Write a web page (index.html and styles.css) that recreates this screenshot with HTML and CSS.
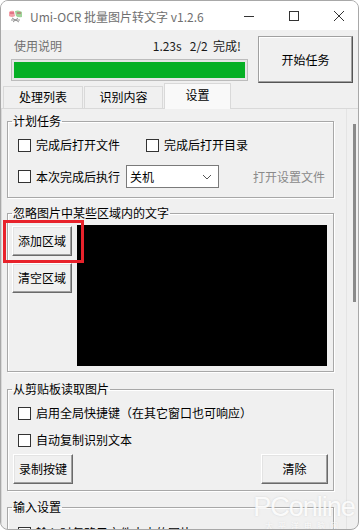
FILE: index.html
```html
<!DOCTYPE html>
<html lang="zh-CN">
<head>
    <meta charset="UTF-8">
    <meta name="viewport" content="width=device-width, initial-scale=1.0">
    <title>Umi-OCR 批量图片转文字 v1.2.6</title>
    <link rel="stylesheet" href="styles.css">
</head>
<body>
    <div class="window">
        <div class="titlebar">
            <svg class="app-icon" width="15" height="13" viewBox="0 0 15 13">
                <path d="M1 2 Q3 0 6 1 L7 6 Q4 8 1 6 Z" fill="#f2a0a8"/>
                <path d="M7 1 Q11 -0.5 14 2 L14 7 Q10 8 8 6 Z" fill="#9fd49a"/>
                <path d="M2 3 L6 3 M9 3 L13 3" stroke="#c35" stroke-width="0.8"/>
                <path d="M4 8 L11 12 M5 12 L10 8 M3 10 L12 10" stroke="#8a8a8a" stroke-width="0.9"/>
            </svg>
            <span class="title">Umi-OCR 批量图片转文字 v1.2.6</span>
            <div class="controls">
                <svg width="10" height="10" viewBox="0 0 10 10"><path d="M0 5.5 H10" stroke="#333" stroke-width="1"/></svg>
                <svg width="10" height="10" viewBox="0 0 10 10"><rect x="0.5" y="0.5" width="9" height="9" fill="none" stroke="#333" stroke-width="1"/></svg>
                <svg width="10" height="10" viewBox="0 0 10 10"><path d="M0 0 L10 10 M10 0 L0 10" stroke="#333" stroke-width="1"/></svg>
            </div>
        </div>

        <div class="top">
            <div class="status">
                <div class="status-row">
                    <span class="help">使用说明</span>
                    <span class="info">1.23s&nbsp;&nbsp; 2/2&nbsp; 完成!</span>
                </div>
                <div class="progress"><div class="progress-fill" style="width: 100%"></div></div>
            </div>
            <button class="btn start">开始任务</button>
        </div>

        <div class="tabs">
            <div class="tab tab-wide">处理列表</div>
            <div class="tab">识别内容</div>
            <div class="tab active">设置</div>
        </div>

        <div class="panel">
            <div class="settings">
                <!-- 计划任务 -->
                <fieldset class="group group-plan">
                    <legend>计划任务</legend>
                    <div class="group-body">
                        <div class="row">
                            <label class="check check-first"><span class="box"></span>完成后打开文件</label>
                            <label class="check"><span class="box"></span>完成后打开目录</label>
                        </div>
                        <div class="row row-exec">
                            <label class="check"><span class="box"></span>本次完成后执行</label>
                            <div class="combo">
                                <span>关机</span>
                                <svg width="10" height="6" viewBox="0 0 10 6"><path d="M1 1 L5 5 L9 1" fill="none" stroke="#555" stroke-width="1"/></svg>
                            </div>
                            <span class="link">打开设置文件</span>
                        </div>
                    </div>
                </fieldset>

                <!-- 忽略区域 -->
                <fieldset class="group group-area">
                    <legend>忽略图片中某些区域内的文字</legend>
                    <div class="group-body area-body">
                        <div class="area-buttons">
                            <div class="mark-wrap">
                                <button class="btn small">添加区域</button>
                                <div class="mark"></div>
                            </div>
                            <button class="btn small">清空区域</button>
                        </div>
                        <div class="canvas"></div>
                    </div>
                </fieldset>

                <!-- 剪贴板 -->
                <fieldset class="group group-clip">
                    <legend>从剪贴板读取图片</legend>
                    <div class="group-body">
                        <div class="row">
                            <label class="check"><span class="box"></span>启用全局快捷键（在其它窗口也可响应）</label>
                        </div>
                        <div class="row row-second">
                            <label class="check"><span class="box"></span>自动复制识别文本</label>
                        </div>
                        <div class="btn-row">
                            <button class="btn small">录制按键</button>
                            <button class="btn clear">清除</button>
                        </div>
                    </div>
                </fieldset>

                <!-- 输入设置 -->
                <fieldset class="group group-input">
                    <legend>输入设置</legend>
                    <div class="group-body">
                        <div class="row">
                            <label class="check"><span class="box"></span>输入时忽略子文件夹内的图片</label>
                        </div>
                    </div>
                </fieldset>
            </div>
            <div class="scrollbar"><div class="thumb"></div></div>
        </div>

        <div class="watermark">
            <div class="wm-big">PConline</div>
            <div class="wm-small">太平洋电脑网</div>
        </div>
    </div>
</body>
</html>
```

FILE: styles.css
```css
body {
    margin: 0;
    background-color: #ffffff;
    font-family: "Noto Sans CJK SC", "Noto Sans", sans-serif;
    font-size: 12px;
    color: #000;
}

.window {
    position: relative;
    box-sizing: border-box;
    width: 359px;
    height: 530px;
    border: 1px solid #a8a8a8;
    border-radius: 8px;
    background-color: #f0f0f0;
    overflow: hidden;
}

.titlebar {
    display: flex;
    align-items: center;
    height: 29px;
    background-color: #ffffff;
}

.app-icon {
    margin-left: 7px;
    margin-top: 1px;
}

.title {
    margin-left: 7px;
    color: #6f6f6f;
    font-size: 12px;
    line-height: 16px;
    margin-top: 2px;
}

.controls {
    display: flex;
    align-items: center;
    gap: 35px;
    margin-left: auto;
    padding-right: 14px;
    margin-top: 1px;
}

/* 顶部 状态 + 按钮 */
.top {
    display: flex;
    padding: 6px 0 0 10px;
    height: 47px;
}

.status {
    width: 237px;
    padding-top: 2px;
}

.status-row {
    display: flex;
    justify-content: space-between;
    height: 16px;
    line-height: 16px;
    padding: 0 7px 0 3px;
    margin-bottom: 5px;
}

.help {
    color: #707070;
}

.info {
    color: #1a1a1a;
}

.progress {
    height: 16px;
    border: 1px solid #bcbcbc;
    padding: 2px;
    background-color: #e6e6e6;
}

.progress-fill {
    height: 100%;
    background-color: #06b025;
}

.btn {
    font-family: "Noto Sans CJK SC", "Noto Sans", sans-serif;
    font-size: 12px;
    line-height: 16px;
    color: #000;
    background-color: #f0f0f0;
    border: 1px solid;
    border-color: #ffffff #6a6a6a #6a6a6a #ffffff;
    box-shadow: inset -1px -1px #a0a0a0, inset 1px 1px #e3e3e3;
    padding: 0;
    margin: 0;
    box-sizing: border-box;
}

.start {
    width: 95px;
    height: 47px;
    margin-left: 10px;
    border-color: #a0a0a0 #555 #555 #a0a0a0;
    box-shadow: inset -1px -1px #a0a0a0, inset 1px 1px #ffffff;
}

/* 标签页 */
.tabs {
    display: flex;
    align-items: flex-end;
    height: 25px;
    padding-left: 2px;
}

.tab {
    box-sizing: border-box;
    width: 79px;
    height: 22px;
    line-height: 20px;
    text-align: center;
    border: 1px solid #d9d9d9;
    border-bottom: none;
    margin-right: 1px;
}

.tab-wide {
    width: 80px;
}

.tab.active {
    width: 67px;
    height: 26px;
    line-height: 22px;
    background-color: #f9f9f9;
    margin-bottom: -1px;
    position: relative;
    z-index: 1;
}

.panel {
    display: flex;
    border-top: 1px solid #d9d9d9;
    border-left: 1px solid #d9d9d9;
    height: 440px;
}

.settings {
    width: 339px;
    padding-left: 5px;
}

.scrollbar {
    flex: 1;
    border-left: 1px solid #e4e4e4;
    padding-top: 15px;
}

.thumb {
    width: 3px;
    height: 178px;
    margin-left: 6px;
    background-color: #8a8a8a;
}

/* 分组框 */
.group {
    box-sizing: border-box;
    width: 327px;
    margin: 8px 0 0 0;
    padding: 0;
    border: 1px solid #a8a8a8;
    box-shadow: inset 1px 1px #ffffff, 1px 1px #ffffff;
    min-width: 0;
}

.group legend {
    margin-left: 4px;
    padding: 0 1px;
    line-height: 16px;
    height: 16px;
}

.group-plan {
    margin-top: 4px;
}

.group-plan .group-body {
    padding: 5px 0 9px 10px;
}

.group-area {
    margin-top: 7px;
}

.group-clip {
    margin-top: 9px;
}

.group-clip .group-body {
    padding: 5px 5px 6px 5px;
}

.group-input .group-body {
    padding: 7px 0 0 10px;
}

.row {
    display: flex;
    align-items: center;
    height: 22px;
}

.group-clip .row {
    padding-left: 5px;
}

.row-exec {
    height: 23px;
    margin-top: 9px;
}

.row-second {
    margin-top: 5px;
}

.check {
    display: flex;
    align-items: center;
    line-height: 16px;
    white-space: nowrap;
}

.check-first {
    width: 128px;
}

.box {
    box-sizing: border-box;
    width: 13px;
    height: 13px;
    border: 1px solid #333;
    background-color: #fff;
    margin-right: 5px;
}

.combo {
    box-sizing: border-box;
    display: flex;
    align-items: center;
    justify-content: space-between;
    width: 93px;
    height: 23px;
    margin-left: 6px;
    padding: 0 6px 0 3px;
    border: 1px solid #7a7a7a;
    background-color: #fff;
    line-height: 16px;
}

.link {
    margin-left: auto;
    margin-right: 8px;
    color: #8a8a8a;
}

/* 区域 */
.area-body {
    display: flex;
    gap: 5px;
    padding: 4px 0 5px 4px;
}

.area-buttons {
    display: flex;
    flex-direction: column;
    gap: 7px;
    padding-top: 1px;
}

.small {
    width: 60px;
    height: 30px;
}

.mark-wrap {
    position: relative;
}

.mark-wrap .btn {
    display: block;
}

.mark {
    position: absolute;
    left: -9px;
    top: -6px;
    right: -12px;
    bottom: -7px;
    border: 3px solid #e8222b;
}

.canvas {
    width: 250px;
    height: 141px;
    background-color: #000;
}

.btn-row {
    display: flex;
    justify-content: space-between;
    margin-top: 3px;
}

.clear {
    width: 67px;
    height: 30px;
}

/* 水印 */
.watermark {
    position: absolute;
    left: 251px;
    top: 492px;
    width: 104px;
    text-align: center;
    color: rgba(255, 255, 255, 0.9);
    text-shadow: 0 0 2px rgba(160, 160, 160, 0.35);
    font-family: "Liberation Sans", sans-serif;
}

.wm-big {
    font-size: 27px;
    line-height: 28px;
    letter-spacing: -1px;
}

.wm-small {
    font-family: "Noto Sans CJK SC", sans-serif;
    font-size: 8px;
    line-height: 9px;
    letter-spacing: 5px;
}
```
